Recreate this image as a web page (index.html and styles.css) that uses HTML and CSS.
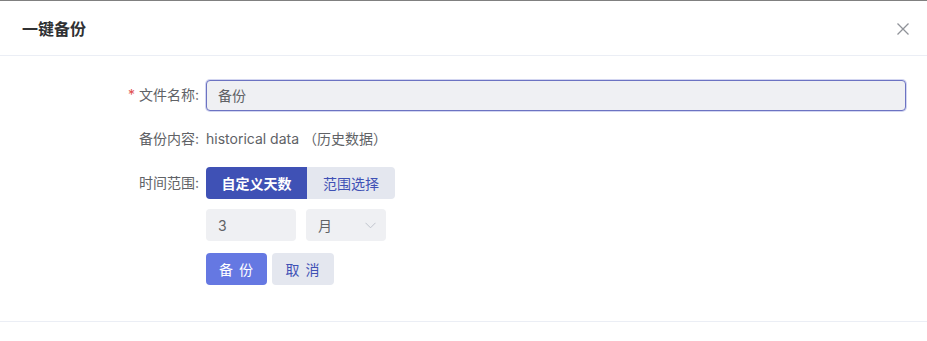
FILE: index.html
```html
<!DOCTYPE html>
<html lang="zh-CN">
<head>
<meta charset="utf-8">
<title>一键备份</title>
<link rel="stylesheet" href="styles.css">
</head>
<body>
<div class="dialog">
  <div class="dialog-header">
    <span class="dialog-title">一键备份</span>
    <button class="close-btn" aria-label="关闭">
      <svg width="12" height="12" viewBox="0 0 12 12"><path d="M0.5 0.5 L11.5 11.5 M11.5 0.5 L0.5 11.5" stroke="#909399" stroke-width="1.3" fill="none"/></svg>
    </button>
  </div>
  <div class="dialog-body">
    <div class="form-row">
      <label class="form-label"><span class="req">*</span>文件名称:</label>
      <div class="form-content">
        <input class="text-input focused" type="text" value="备份">
      </div>
    </div>
    <div class="form-row">
      <label class="form-label">备份内容:</label>
      <div class="form-content">
        <span class="plain-text">historical data （历史数据）</span>
      </div>
    </div>
    <div class="form-row seg-row">
      <label class="form-label">时间范围:</label>
      <div class="form-content">
        <div class="segmented">
          <button class="seg seg-active">自定义天数</button>
          <button class="seg">范围选择</button>
        </div>
      </div>
    </div>
    <div class="form-row">
      <div class="form-label"></div>
      <div class="form-content inline">
        <input class="small-input" type="text" value="3">
        <div class="select">
          <span>月</span>
          <svg width="11" height="7" viewBox="0 0 11 7"><path d="M0.5 0.8 L5.5 5.8 L10.5 0.8" stroke="#c0c4cc" stroke-width="1" fill="none"/></svg>
        </div>
      </div>
    </div>
    <div class="form-row">
      <div class="form-label"></div>
      <div class="form-content inline">
        <button class="btn btn-primary">备 份</button>
        <button class="btn btn-default">取 消</button>
      </div>
    </div>
  </div>
</div>
</body>
</html>
```

FILE: styles.css
```css
* { box-sizing: border-box; }
html, body {
  margin: 0;
  padding: 0;
  background: #ffffff;
}
body {
  font-family: Inter, "Noto Sans CJK SC", sans-serif;
  font-size: 14px;
  color: #606266;
  border-top: 1px solid #808080;
}
.dialog {
  width: 927px;
}
.dialog-header {
  height: 55px;
  display: flex;
  align-items: center;
  justify-content: space-between;
  padding: 0 18px 0 22px;
  border-bottom: 1px solid #ebeef5;
}
.dialog-title {
  font-size: 16px;
  font-weight: 600;
  color: #303133;
  line-height: 22px;
  margin-top: 1px;
}
.close-btn {
  border: 0;
  background: transparent;
  padding: 0;
  width: 12px;
  height: 12px;
  display: flex;
  cursor: pointer;
  margin-top: 1px;
}
.dialog-body {
  padding: 23px 0 36px 0;
  border-bottom: 1px solid #ebeef5;
}
.form-row {
  display: flex;
  align-items: center;
  min-height: 32px;
  margin-bottom: 12px;
}
.form-row:last-child { margin-bottom: 0; }
.form-row.seg-row { margin-bottom: 10px; }
.form-label {
  width: 206px;
  flex: none;
  text-align: right;
  padding-right: 7px;
  color: #606266;
  line-height: 32px;
}
.req {
  color: #e04f4f;
  margin-right: 4px;
}
.form-content {
  flex: 1;
  padding-right: 21px;
}
.inline {
  display: flex;
  align-items: center;
}
.text-input {
  width: 100%;
  height: 31px;
  border: 1px solid #6c73c2;
  border-radius: 4px;
  background: #eff0f3;
  box-shadow: 0 0 0 1px #d3d6f1;
  padding: 0 11px;
  font-family: inherit;
  font-size: 14px;
  color: #606266;
  outline: none;
}
.plain-text {
  color: #606266;
  line-height: 32px;
}
.segmented {
  display: flex;
}
.seg {
  height: 32px;
  border: 0;
  font-family: inherit;
  font-size: 14px;
  background: #e4e7ef;
  color: #3f51b5;
  padding: 0;
  width: 88px;
  border-radius: 0 4px 4px 0;
}
.seg-active {
  width: 101px;
  background: #3f51b5;
  color: #ffffff;
  font-weight: 600;
  border-radius: 4px 0 0 4px;
}
.small-input {
  width: 90px;
  height: 32px;
  border: 0;
  border-radius: 4px;
  background: #eff0f3;
  padding: 0 12px;
  font-family: inherit;
  font-size: 14px;
  color: #606266;
  outline: none;
}
.select {
  width: 80px;
  height: 32px;
  margin-left: 10px;
  border-radius: 4px;
  background: #eff0f3;
  display: flex;
  align-items: center;
  justify-content: space-between;
  padding: 0 10px 0 12px;
  color: #606266;
}
.btn {
  height: 32px;
  border: 0;
  border-radius: 4px;
  font-family: inherit;
  font-size: 14px;
  padding: 0;
  letter-spacing: 1px;
}
.btn-primary {
  width: 61px;
  background: #6578e2;
  color: #ffffff;
}
.btn-default {
  width: 62px;
  margin-left: 5px;
  background: #e4e7ef;
  color: #3f51b5;
}
```
